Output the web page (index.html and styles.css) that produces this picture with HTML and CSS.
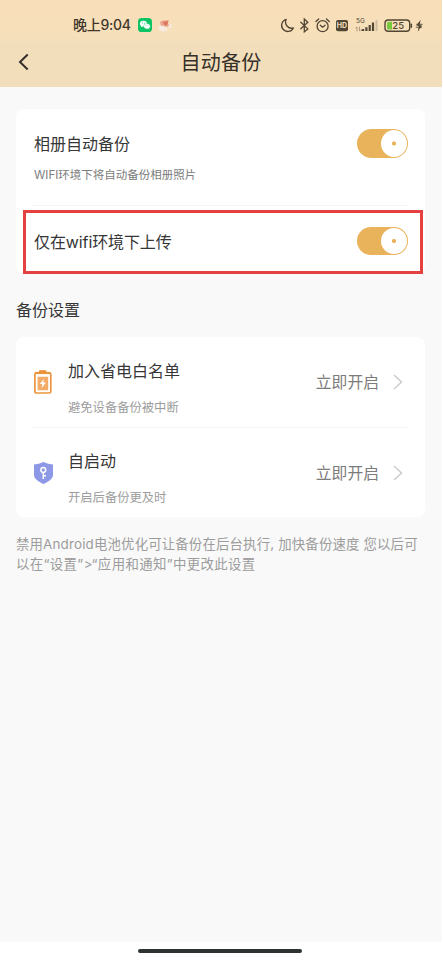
FILE: index.html
```html
<!DOCTYPE html>
<html lang="zh-CN">
<head>
<meta charset="utf-8">
<title>自动备份</title>
<link rel="stylesheet" href="styles.css">
</head>
<body>
<div class="phone">
  <header class="top">
    <div class="status">
      <span class="time">晚上9:04</span>
      <svg class="wechat" width="14" height="14" viewBox="0 0 14 14">
        <rect width="14" height="14" rx="3.6" fill="#0cc463"/>
        <path d="M5.500 2.800C3.400 2.800 1.900 4.100 1.900 5.800c0 .9.5 1.800 1.300 2.300l-.3 1.200 1.300-.7c.4.1.8.2 1.300.2 2 0 3.600-1.300 3.600-3S7.500 2.800 5.500 2.800z" fill="#fff"/>
        <path d="M9 5.600c-1.900 0-3.300 1.200-3.300 2.700S7.100 11 9 11c.4 0 .8-.1 1.100-.2l1.200.6-.3-1c.8-.5 1.300-1.200 1.300-2.100C12.300 6.800 10.900 5.600 9 5.600z" fill="#fff" stroke="#0cc463" stroke-width=".4"/>
        <g fill="#0cc463"><circle cx="4.400" cy="5.100" r=".5"/><circle cx="6.700" cy="5.100" r=".5"/><circle cx="8" cy="7.700" r=".4"/><circle cx="10.100" cy="7.700" r=".4"/></g>
      </svg>
      <svg class="flower" width="15" height="13" viewBox="0 0 15 13">
        <path d="M1 7.500C2 5 4 6 5 7l4 2 .5 2.500Q5 13 2 11.500 0 10 1 7.500z" fill="#f8ece2"/>
        <circle cx="12" cy="7" r="2.300" fill="#f7e6da"/>
        <path d="M2 3.500Q3 1 6 1.500L11 1 10 4l1 3-3 1-3-1.500-2 .5z" fill="#eba58f"/>
        <path d="M5 3l5-1-.5 3.500-3 1z" fill="#df7560"/>
      </svg>
      <span class="grow"></span>
      <svg class="indicators" width="144" height="18" viewBox="280 16 144 18" fill="none" stroke="#514634" stroke-width="1.300" stroke-linecap="round" stroke-linejoin="round">
        <path d="M286.200 19.300a6.200 6.200 0 1 0 7.200 8.700A6.200 6.200 0 0 1 286.200 19.300z"/>
        <path d="M300.800 22.200l7 6.700-3.500 3V19l3.500 3.200-7 6.500" stroke-linejoin="miter"/>
        <circle cx="322.600" cy="26.200" r="5.500"/><path d="M320.300 25.200l2.300 2 2.500-2M315.900 21.500l2.800-2.500M329.300 21.500l-2.800-2.500"/>
        <rect x="336" y="20" width="12" height="11.300" rx="2" fill="#514634" stroke="none"/>
        <text class="hd" x="342" y="28.200">HD</text>
        <text class="net" x="360.500" y="22.900">5G</text>
        <path d="M357 31v-4l-1 1M359.500 27v4l1-1" stroke-width=".7" stroke="#8b7b64"/>
        <g fill="#514634" stroke="none"><path d="M361.400 31v-1.500l2.800-.8V31z"/><rect x="365.300" y="27.200" width="2.200" height="3.800"/><rect x="368.600" y="25" width="2.200" height="6"/><rect x="371.900" y="22.500" width="2.200" height="8.500"/><rect x="375.500" y="20" width="2" height="11" fill="#cebda0"/></g>
        <rect x="385" y="20" width="24.700" height="11.200" rx="3.200" stroke-width="1.400"/>
        <path d="M387 23.300q0-1.500 1.500-1.500h3.500v7.600h-3.500q-1.500 0-1.500-1.500z" fill="#76c83c" stroke="none"/>
        <path d="M411.300 24.300v3" stroke-width="1.500"/>
        <text class="level" x="398.200" y="29">25</text>
        <path d="M420.600 19.800l-4.300 5.800 2.500.5-1 5.600 4.200-6.200-2.400-.6z" fill="#514634" stroke="none"/><path d="M416.700 24.300h5.500M416.200 27.200h5.500" stroke-width=".9"/>
      </svg>
    </div>
    <div class="titlebar">
      <svg class="back" width="12" height="18" viewBox="0 0 12 18"><path d="M9.700 1.500L2 9l7.700 7.500" fill="none" stroke="#342f28" stroke-width="2"/></svg>
      <h1>自动备份</h1>
    </div>
  </header>

  <main>
    <section class="card switches">
      <div class="row album">
        <div>
          <div class="name">相册自动备份</div>
          <div class="hint">WIFI环境下将自动备份相册照片</div>
        </div>
        <span class="toggle"></span>
      </div>
      <div class="row wifi">
        <div class="name">仅在wifi环境下上传</div>
        <span class="toggle"></span>
      </div>
      <div class="mark"></div>
    </section>

    <h2>备份设置</h2>

    <section class="card settings">
      <div class="item">
        <svg class="icon" width="20" height="26" viewBox="0 0 20 26">
          <path d="M5 3.500V2Q5 1.200 5.800 1.200h5.800q.8 0 .8.8v1.500z" fill="#e88c32"/>
          <rect x=".9" y="4" width="15.900" height="20" rx="1.600" fill="#fff" stroke="#eb963f" stroke-width="1.700"/>
          <path d="M1 4h15.700" stroke="#eb963f" stroke-width="2.200"/>
          <rect x="3.600" y="7.700" width="10.600" height="13.600" rx=".5" fill="#f2ac68"/>
          <path d="M9.800 10L5.800 15h2.500l-.7 4 4.400-5.400H9.300z" fill="#fff"/>
        </svg>
        <div class="info"><div class="name">加入省电白名单</div><div class="desc">避免设备备份被中断</div></div>
        <span class="action">立即开启</span>
        <svg class="arrow" width="10" height="16" viewBox="0 0 10 16"><path d="M1 1l7.500 7L1 15" fill="none" stroke="#cacaca" stroke-width="1.400"/></svg>
      </div>
      <div class="item">
        <svg class="icon" width="20" height="24" viewBox="0 0 20 24">
          <path d="M9.500 1Q14 3.200 19 3.400V14c0 4-5 7-9.500 9C5 21 0 18 0 14V3.400Q5 3.200 9.500 1z" fill="#8d98e7"/>
          <g fill="none" stroke="#fff" stroke-width="1.500"><circle cx="9.300" cy="9" r="2.400"/><path d="M9.300 11.300V18M9.300 14.700h2.700"/></g>
        </svg>
        <div class="info"><div class="name">自启动</div><div class="desc">开启后备份更及时</div></div>
        <span class="action">立即开启</span>
        <svg class="arrow" width="10" height="16" viewBox="0 0 10 16"><path d="M1 1l7.500 7L1 15" fill="none" stroke="#cacaca" stroke-width="1.400"/></svg>
      </div>
    </section>

    <p class="note">禁用Android电池优化可让备份在后台执行, 加快备份速度 您以后可<br><span class="wide">以在“设置”&gt;“应用和通知”中更改此设置</span></p>
  </main>
  <footer><span class="home"></span></footer>
</div>
</body>
</html>
```
FILE: styles.css
```css
* { box-sizing: border-box; }
body { margin: 0; background: #fff; font-family: Inter, "Noto Sans CJK SC", sans-serif; color: #363636; }
.phone { width: 442px; height: 960px; background: #f9f9f9; display: flex; flex-direction: column; overflow: hidden; }
.top { height: 87px; flex: none; background: linear-gradient(#f8dfb9 0, #f7dfba 32px, #f3debc 44px, #f3debc 100%); }
.status { height: 37px; padding: 13px 18px 0 73px; display: flex; align-items: center; }
.time { width: 57px; font-size: 14px; font-weight: 500; line-height: 22px; letter-spacing: -.25px; color: #3f372b; white-space: nowrap; }
.wechat { margin-left: 8px; }
.flower { margin-left: 6px; }
.grow { flex: 1; }
.hd, .net, .level { fill: #514634; stroke: none; text-anchor: middle; font-family: Inter, sans-serif; }
.hd { fill: #f5dfbb; font-size: 7px; font-weight: 700; }
.net { font-size: 6.500px; }
.level { font-size: 9.500px; font-weight: 500; }
.titlebar { height: 50px; display: grid; grid-template-columns: 40px 1fr 40px; align-items: center; }
.back { margin-left: 18px; }
h1 { margin: 0; padding-top: 2px; font-size: 20px; font-weight: 400; line-height: 30px; text-align: center; letter-spacing: .2px; color: #342f28; }
main { flex: 1; padding: 22px 17px 0 16px; }
.card { background: #fff; border-radius: 8px; padding: 0 17px 0 16px; }
.switches { position: relative; height: 165px; }
.row { display: flex; justify-content: space-between; padding-left: 2px; }
.album { height: 97px; padding-top: 20px; border-bottom: 1px solid #f3f3f3; }
.wifi { padding-top: 21px; }
.name { font-size: 16px; line-height: 24px; white-space: nowrap; }
.album .name { margin-top: 3px; }
.wifi .name { margin-top: 3px; letter-spacing: -.1px; }
.hint { font-size: 11.500px; line-height: 18px; margin-top: 10px; color: #7c7c7c; white-space: nowrap; }
.toggle { width: 51px; height: 29px; flex: none; border-radius: 15px; background: #e8b35b; padding: 1px; display: flex; justify-content: flex-end; }
.wifi .toggle { height: 28px; }
.toggle::before { content: ""; width: 26px; height: 100%; border-radius: 50%; background: radial-gradient(circle, #e8b35b 1.700px, #fff 2.400px); }
.mark { position: absolute; left: 7px; top: 101px; width: 400px; height: 64px; border: 3px solid #e64141; }
h2 { margin: 24px 0 15px; font-size: 16px; font-weight: 400; line-height: 24px; }
.settings { height: 180px; }
.item { height: 90px; display: flex; align-items: center; padding-left: 2px; }
.item + .item { border-top: 1px solid #f3f3f3; }
.icon { flex: none; }
.info { flex: 1; margin-left: 14px; padding-top: 11px; }
.desc { font-size: 12.300px; line-height: 18px; margin-top: 16px; color: #9c9c9c; }
.action { font-size: 15.800px; line-height: 24px; padding-top: 2px; color: #7c7c7c; }
.arrow { margin: 0 5px 0 14px; }
.note { margin: 17px 0 0; font-size: 13.400px; line-height: 20px; letter-spacing: .17px; color: #9c9c9c; white-space: nowrap; }
.wide { letter-spacing: .38px; }
footer { height: 18px; background: #fff; display: flex; justify-content: center; padding-top: 7px; }
.home { width: 164px; height: 4px; border-radius: 2px; background: #2f332f; margin-right: 2px; }
```
